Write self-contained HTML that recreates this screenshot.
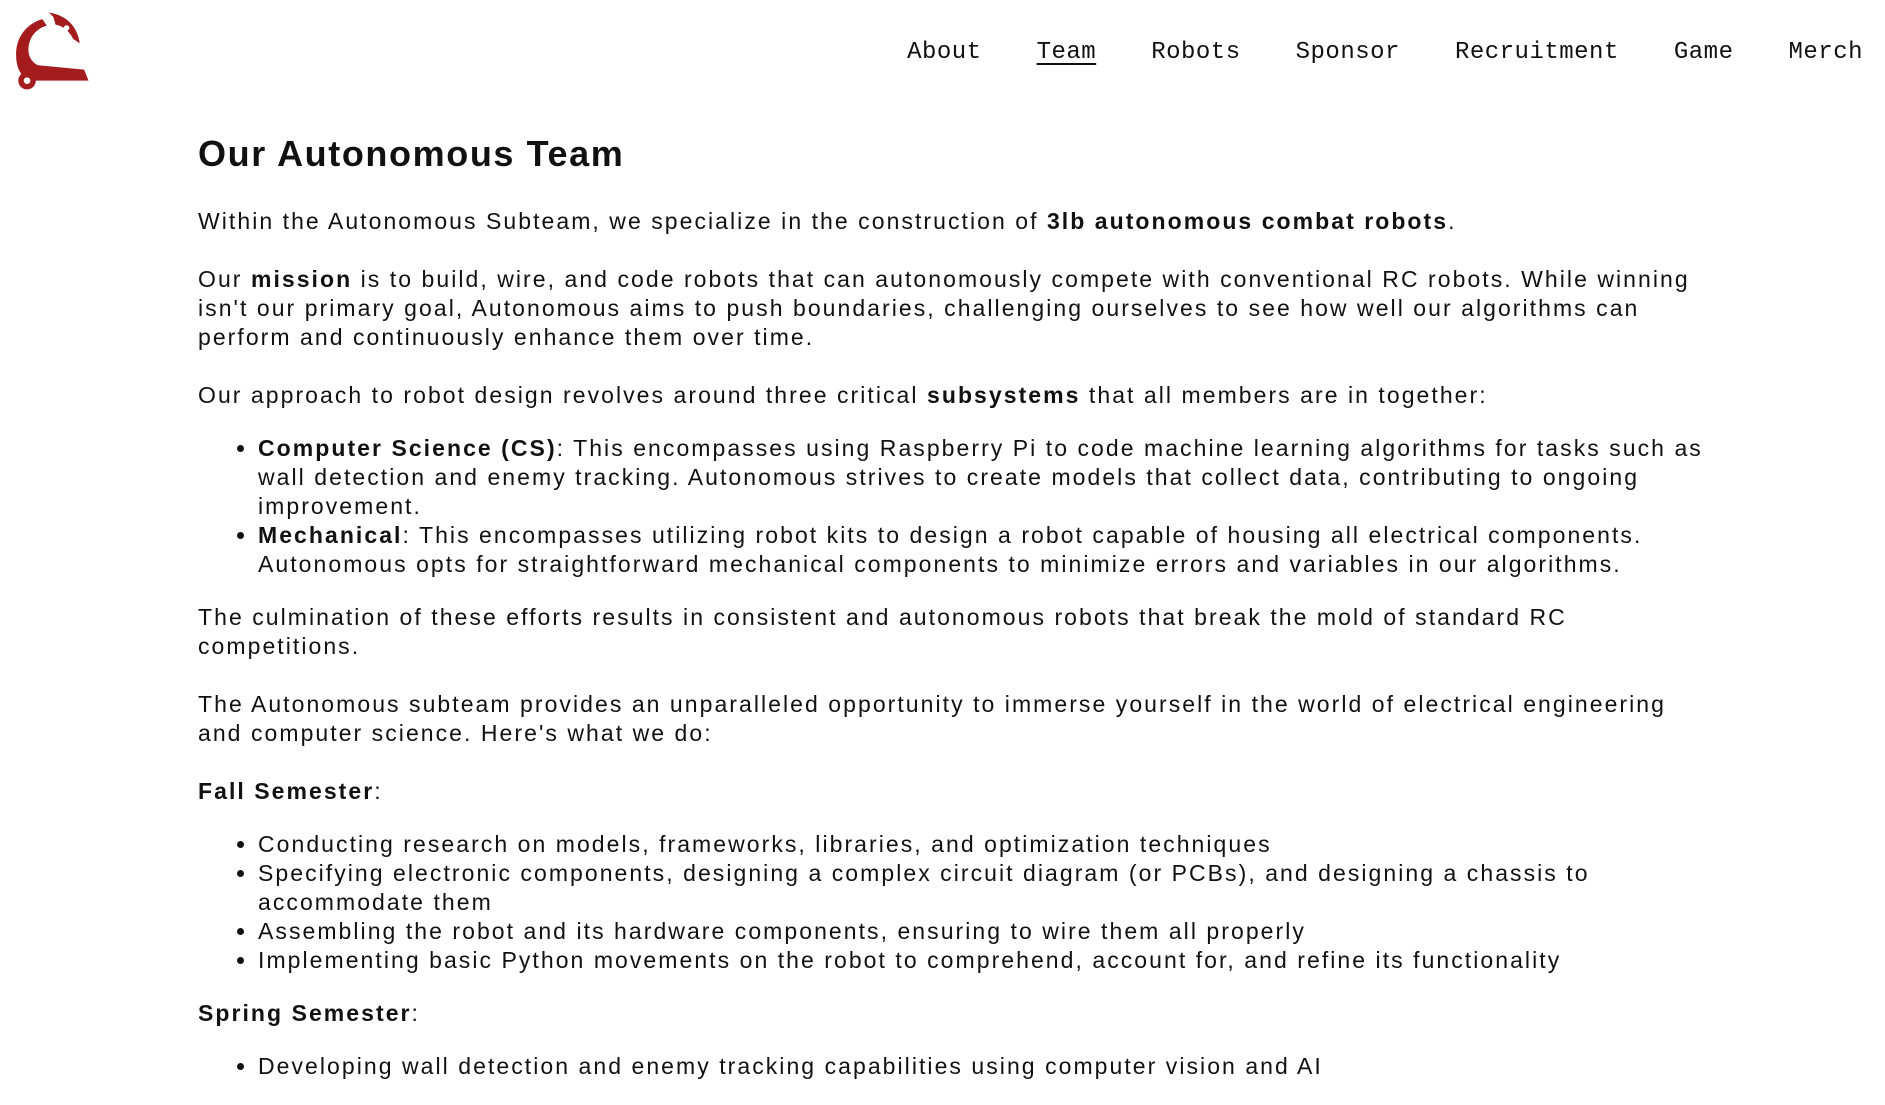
<!DOCTYPE html>
<html><head><meta charset="utf-8"><style>
*{margin:0;padding:0;box-sizing:border-box}
body{width:1885px;height:1078px;overflow:hidden;background:#fff;color:#111;font-family:"Liberation Sans",sans-serif;font-size:23px;line-height:29px;letter-spacing:2.05px}
nav{position:absolute;top:38px;right:22px;font-family:"Liberation Mono",monospace;font-size:24px;letter-spacing:0.5px;white-space:nowrap}
nav a{color:#111;text-decoration:none;margin-left:55px}
nav a.u{text-decoration:underline;text-underline-offset:5px}
.logo{position:absolute;left:4px;top:6px}
main{position:absolute;left:198px;top:132px;width:1660px;white-space:nowrap}
h1{font-size:36px;line-height:44px;font-weight:bold;letter-spacing:1.6px;margin-bottom:31px}
p{margin-bottom:29px}
ul{margin:-5px 0 24px 60px;list-style:disc}
</style></head><body>
<svg class="logo" width="90" height="90" viewBox="0 0 80 82">
<path d="M40 6 C55 8 66 18 68 34 L62 30 C58 22 52 18 46 17 L44 10 Z" fill="#a51c1f"/>
<path d="M34 12 C20 16 10 28 10 44 C10 56 14 64 22 68 L76 68 L72 58 L30 54 C22 50 20 42 22 34 C24 26 30 20 38 18 Z" fill="#a51c1f"/>
<circle cx="20" cy="68" r="8" fill="#a51c1f"/><circle cx="20" cy="68" r="3" fill="#fff"/>
<circle cx="56" cy="20" r="2.5" fill="#fff"/>
</svg>
<nav><a>About</a><a class="u">Team</a><a>Robots</a><a>Sponsor</a><a>Recruitment</a><a>Game</a><a>Merch</a></nav>
<main>
<h1>Our Autonomous Team</h1>
<p>Within the Autonomous Subteam, we specialize in the construction of <b>3lb autonomous combat robots</b>.</p>
<p>Our <b>mission</b> is to build, wire, and code robots that can autonomously compete with conventional RC robots. While winning<br>isn't our primary goal, Autonomous aims to push boundaries, challenging ourselves to see how well our algorithms can<br>perform and continuously enhance them over time.</p>
<p>Our approach to robot design revolves around three critical <b>subsystems</b> that all members are in together:</p>
<ul>
<li><b>Computer Science (CS)</b>: This encompasses using Raspberry Pi to code machine learning algorithms for tasks such as<br>wall detection and enemy tracking. Autonomous strives to create models that collect data, contributing to ongoing<br>improvement.</li>
<li><b>Mechanical</b>: This encompasses utilizing robot kits to design a robot capable of housing all electrical components.<br>Autonomous opts for straightforward mechanical components to minimize errors and variables in our algorithms.</li>
</ul>
<p>The culmination of these efforts results in consistent and autonomous robots that break the mold of standard RC<br>competitions.</p>
<p>The Autonomous subteam provides an unparalleled opportunity to immerse yourself in the world of electrical engineering<br>and computer science. Here's what we do:</p>
<p><b>Fall Semester</b>:</p>
<ul>
<li>Conducting research on models, frameworks, libraries, and optimization techniques</li>
<li>Specifying electronic components, designing a complex circuit diagram (or PCBs), and designing a chassis to<br>accommodate them</li>
<li>Assembling the robot and its hardware components, ensuring to wire them all properly</li>
<li>Implementing basic Python movements on the robot to comprehend, account for, and refine its functionality</li>
</ul>
<p><b>Spring Semester</b>:</p>
<ul>
<li>Developing wall detection and enemy tracking capabilities using computer vision and AI</li>
</ul>
</main>
</body></html>
